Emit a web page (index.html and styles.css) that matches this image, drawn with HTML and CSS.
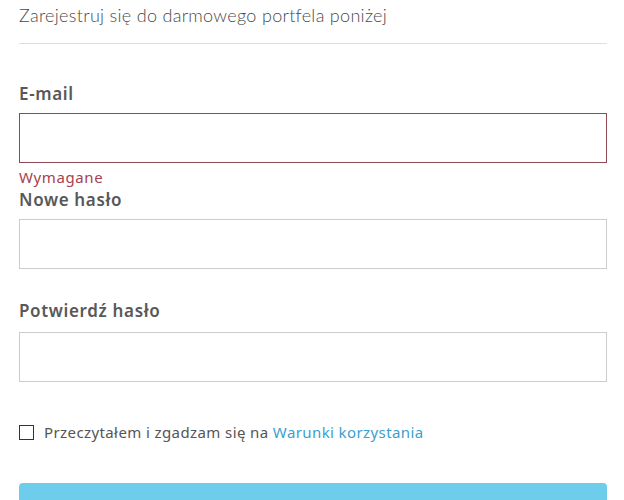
FILE: index.html
```html
<!DOCTYPE html>
<html lang="pl">
<head>
<meta charset="utf-8">
<title>Rejestracja</title>
<link rel="stylesheet" href="styles.css">
</head>
<body>
<div class="page">
  <h2 class="intro">Zarejestruj się do darmowego portfela poniżej</h2>
  <hr class="divider">
  <form class="form">
    <div class="field field-error">
      <label class="label" for="email">E-mail</label>
      <input class="input input-invalid" id="email" type="email">
      <div class="error">Wymagane</div>
    </div>
    <div class="field field-new">
      <label class="label" for="pw">Nowe hasło</label>
      <input class="input" id="pw" type="password">
    </div>
    <div class="field field-confirm">
      <label class="label" for="pw2">Potwierdź hasło</label>
      <input class="input" id="pw2" type="password">
    </div>
    <label class="terms">
      <span class="box"></span>
      <span class="terms-text">Przeczytałem i zgadzam się na <a class="link" href="#">Warunki korzystania</a></span>
    </label>
    <button class="submit" type="button"></button>
  </form>
</div>
</body>
</html>
```

FILE: styles.css
```css
* { box-sizing: border-box; }
html, body { margin: 0; padding: 0; background: #fff; }
body { overflow: hidden; }
.page {
  padding: 4px 17px 0 19px;
  width: 624px;
}
.intro {
  margin: 0;
  font-family: Lato, "Open Sans", sans-serif;
  font-weight: 300;
  font-size: 18px;
  line-height: 22px;
  color: #4a4a4a;
  letter-spacing: 0.3px;
}
.divider {
  margin: 17px 0 0;
  border: 0;
  height: 1px;
  background: #dedede;
}
.form { display: flex; flex-direction: column; }
.field { display: flex; flex-direction: column; }
.field-error { margin-top: 40px; }
.field-new { margin-top: 4px; }
.field-confirm { margin-top: 32px; }
.label {
  font-family: "Noto Sans", sans-serif;
  font-weight: 600;
  font-size: 17px;
  line-height: 20px;
  color: #585858;
  letter-spacing: 0.65px;
  margin-bottom: 9px;
}
.field-confirm .label { margin-bottom: 11px; }
.input {
  display: block;
  width: 588px;
  height: 50px;
  margin: 0;
  border: 1px solid #cccccc;
  border-radius: 0;
  background: #fff;
  outline: none;
}
.input-invalid { border-color: #8c4a55; }
.error {
  margin-top: 5px;
  font-family: "Noto Sans", sans-serif;
  font-size: 15px;
  line-height: 18px;
  color: #a8414f;
  letter-spacing: 0.6px;
}
.terms {
  margin-top: 43px;
  display: flex;
  align-items: flex-start;
  gap: 10px;
  font-family: "Noto Sans", sans-serif;
  font-size: 15px;
  line-height: 15px;
  color: #555;
  letter-spacing: 0.4px;
}
.box {
  width: 15px;
  height: 15px;
  border: 1.5px solid #333;
  flex: none;
}
.link { color: #3aa0cf; text-decoration: none; }
.submit {
  margin-top: 43px;
  width: 588px;
  height: 50px;
  border: 0;
  border-radius: 4px;
  background: #6dcdea;
}
```
